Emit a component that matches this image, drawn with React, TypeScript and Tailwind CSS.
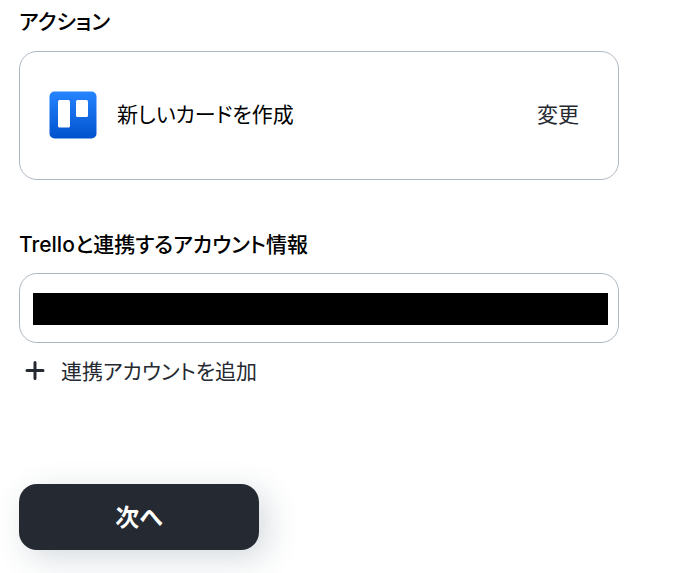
import React from "react";

function TrelloIcon() {
  return (
    <svg className="size-12 shrink-0" viewBox="0 0 48 48" aria-hidden="true">
      <defs>
        <linearGradient id="trello" x1="0" y1="0" x2="0" y2="1">
          <stop offset="0" stopColor="#2684ff" />
          <stop offset="1" stopColor="#0052cc" />
        </linearGradient>
      </defs>
      <rect x="0.5" y="0.5" width="47" height="47" rx="5" fill="url(#trello)" />
      <rect x="9" y="9" width="12" height="27.5" rx="1.5" fill="#fff" />
      <rect x="27" y="9" width="12" height="17" rx="1.5" fill="#fff" />
    </svg>
  );
}

export default function App() {
  return (
    <main className="min-h-screen bg-white pr-[57px] pl-[19px] pt-[6px] pb-[23px] font-['Inter','Noto_Sans_CJK_JP',sans-serif] text-[21px] text-[#252931] [font-feature-settings:'palt']">
      <section>
        <h2 className="font-medium leading-8 text-black">アクション</h2>
        <div className="mt-[13px] flex items-center justify-between rounded-[18px] border border-[#adb7c2] pt-[39px] pb-10 pr-[39px] pl-[29px]">
          <div className="flex items-center gap-5">
            <TrelloIcon />
            <span className="text-black">新しいカードを作成</span>
          </div>
          <button type="button">変更</button>
        </div>
      </section>
      <section className="mt-[49px]">
        <label htmlFor="account" className="block font-medium leading-8 text-black">
          Trelloと連携するアカウント情報
        </label>
        <div className="mt-3 rounded-[18px] border border-[#adb7c2] pt-[19px] pr-[10px] pb-[17px] pl-[13px]">
          <input id="account" type="text" readOnly className="block h-8 w-full bg-black" />
        </div>
        <button type="button" className="mt-[13px] flex items-center gap-[14px] pl-1 leading-8">
          <svg className="size-6" viewBox="0 0 24 24" fill="none" stroke="currentColor" strokeWidth="3" strokeLinecap="round" aria-hidden="true">
            <path d="M12 2.5v16M4 10.5h16" />
          </svg>
          連携アカウントを追加
        </button>
      </section>
      <button type="button" className="mt-24 h-[66px] w-60 rounded-[18px] bg-[#252931] pt-0.5 text-2xl font-bold text-white shadow-[8px_8px_32px_#2f485c33]">
        次へ
      </button>
    </main>
  );
}
